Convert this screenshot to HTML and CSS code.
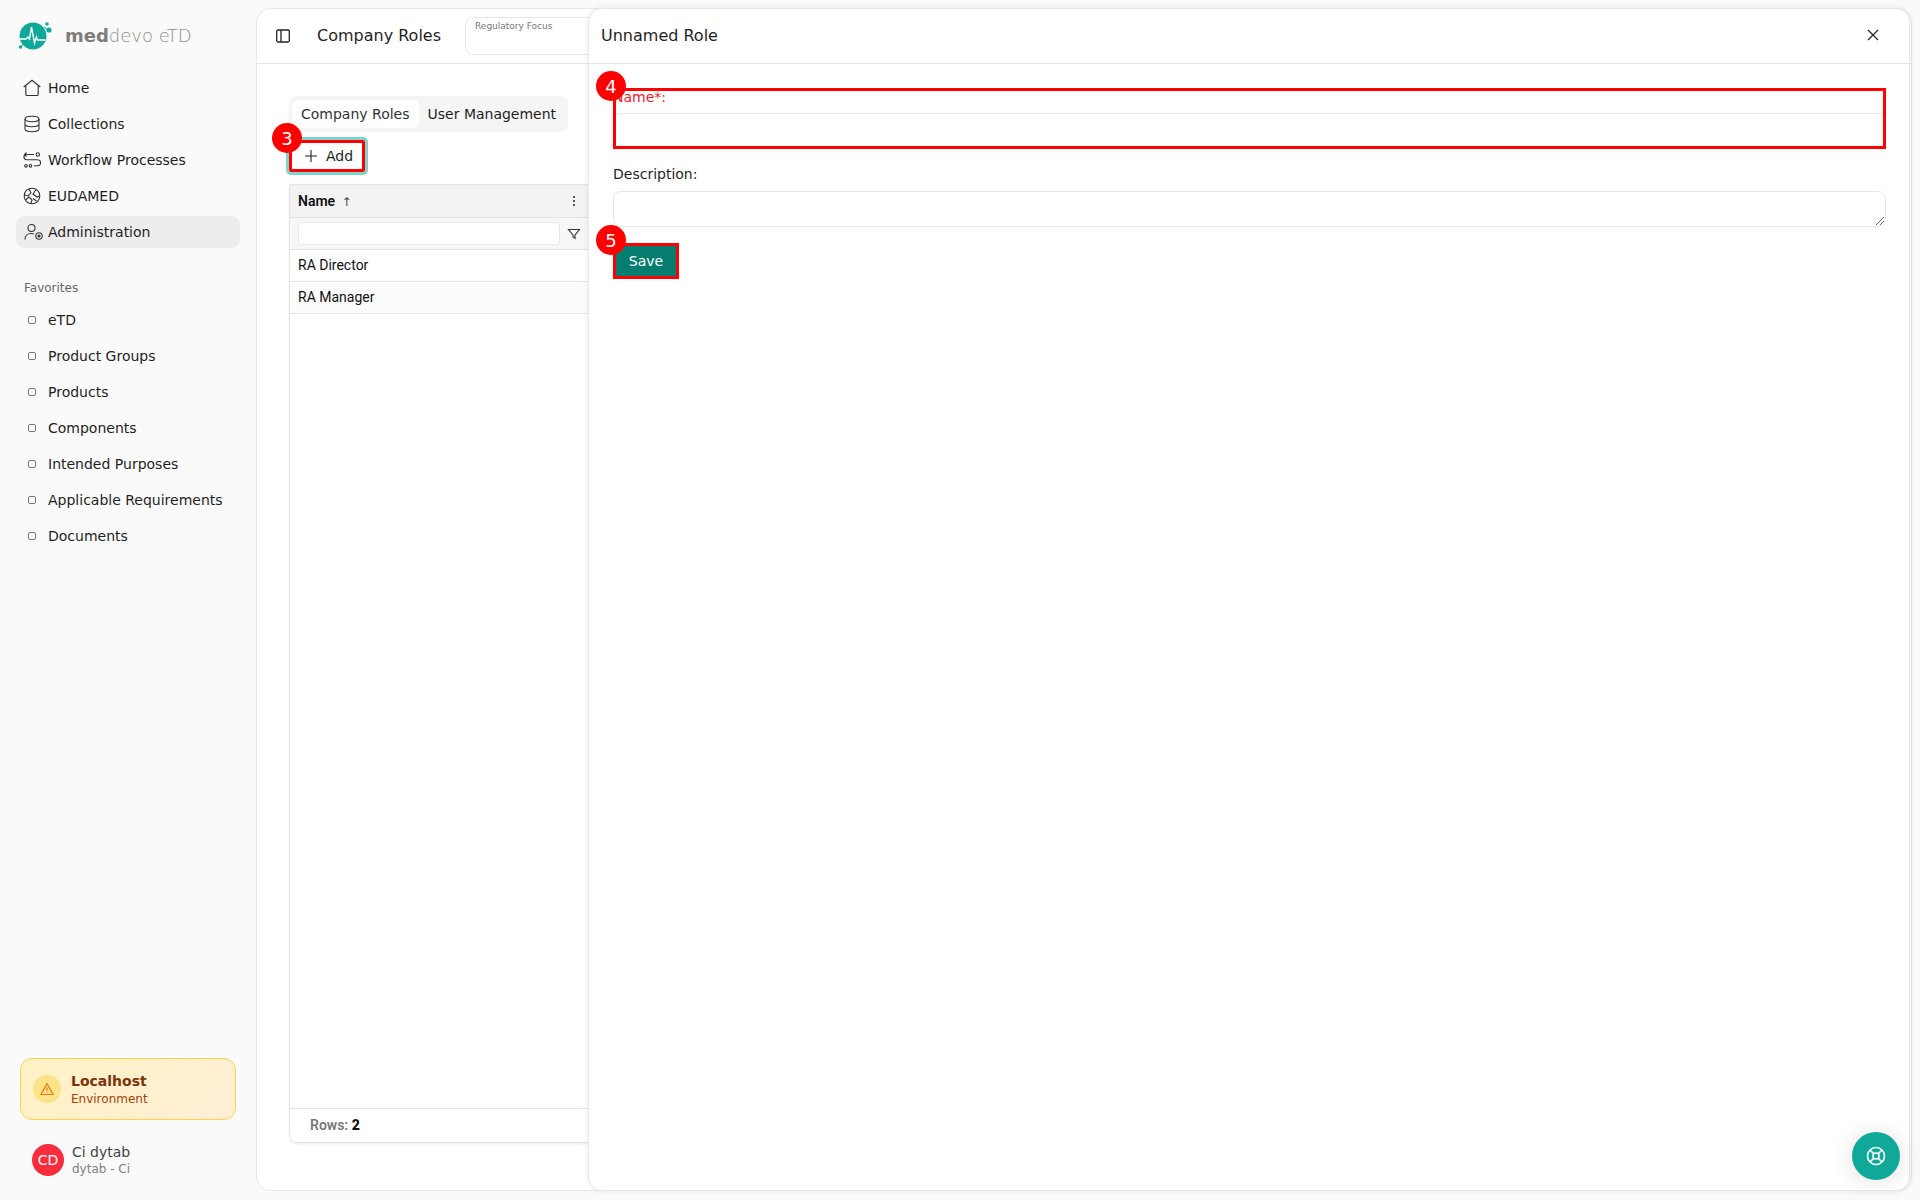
FILE: index.html
```html
<!DOCTYPE html>
<html lang="en">
<head>
    <meta charset="UTF-8">
    <title>Company Roles</title>
    <link rel="stylesheet" href="styles.css">
</head>
<body>
    <aside class="sidebar">
        <div class="logo">
            <svg class="logo-mark" width="36" height="32" viewBox="0 0 36 32">
                <circle cx="15" cy="17" r="13.500" fill="#10a899"/>
                <circle cx="29" cy="5" r="1.800" fill="#10a899"/>
                <circle cx="31" cy="11" r="2.600" fill="#10a899"/>
                <circle cx="2.500" cy="28" r="1.800" fill="#10a899"/>
                <path d="M26 8l4 3M2.500 28l3-3" stroke="#10a899" stroke-width="1"/>
                <path d="M1 20h7l2-2 1.500 2L13.500 8l3 16 2-6 1 3h8" fill="none" stroke="#fff" stroke-width="1.400"/>
            </svg>
            <span class="logo-text"><b>med</b>devo eTD</span>
        </div>
        <nav class="nav">
            <a class="nav-item">
                <svg class="nav-icon" viewBox="0 0 18 18"><path d="M.7 8 9 1.300 17.300 8M2.800 6.500v9a1 1 0 0 0 1 1h10.400a1 1 0 0 0 1-1v-9"/></svg>
                Home
            </a>
            <a class="nav-item">
                <svg class="nav-icon" viewBox="0 0 18 18"><ellipse cx="9" cy="4" rx="7" ry="2.700"/><path d="M2 4v10c0 1.500 3.100 2.700 7 2.700s7-1.200 7-2.700V4M2 9c0 1.500 3.100 2.700 7 2.700s7-1.200 7-2.700"/></svg>
                Collections
            </a>
            <a class="nav-item">
                <svg class="nav-icon" viewBox="0 0 18 18"><circle cx="14.800" cy="3.500" r="1.700"/><circle cx="3" cy="14.800" r="1.300"/><circle cx="7.500" cy="14.800" r="1.300"/><path d="M11 3.500H3.500a2.500 2.500 0 0 0 0 5.200h11a2.900 2.900 0 0 1 0 6.100H11M3.500 1.500 1.500 3.500l2 2"/></svg>
                Workflow Processes
            </a>
            <a class="nav-item">
                <svg class="nav-icon" viewBox="0 0 18 18"><circle cx="9" cy="9" r="7.800"/><path d="M6 2 8 6 5 9 1.500 8M13 2.500 10 7l4 3 2.500-1M2.500 13 6 10l3 3-1 3.500M10 11.500l3.500 2.500"/></svg>
                EUDAMED
            </a>
            <a class="nav-item active">
                <svg class="nav-icon wide" viewBox="0 0 20 18"><circle cx="7.500" cy="5" r="3.500"/><path d="M1 16.500c0-3.500 2.500-6 6-6 1 0 2 .2 2.800.6"/><circle cx="15" cy="13" r="3.200"/><circle cx="15" cy="13" r="1" fill="#333"/></svg>
                Administration
            </a>
        </nav>
        <div class="nav-label">Favorites</div>
        <nav class="nav">
            <a class="nav-item"><span class="fav-dot"></span>eTD</a>
            <a class="nav-item"><span class="fav-dot"></span>Product Groups</a>
            <a class="nav-item"><span class="fav-dot"></span>Products</a>
            <a class="nav-item"><span class="fav-dot"></span>Components</a>
            <a class="nav-item"><span class="fav-dot"></span>Intended Purposes</a>
            <a class="nav-item"><span class="fav-dot"></span>Applicable Requirements</a>
            <a class="nav-item"><span class="fav-dot"></span>Documents</a>
        </nav>
        <div class="env-card">
            <div class="env-icon">
                <svg width="14" height="14" viewBox="0 0 14 14" fill="none" stroke="#e8791a" stroke-width="1.200"><path d="M7 1.500 13 12.500H1zM7 5.500v3.500M7 10.300v.8"/></svg>
            </div>
            <div>
                <div class="env-name">Localhost</div>
                <div class="env-sub">Environment</div>
            </div>
        </div>
        <div class="user">
            <div class="avatar">CD</div>
            <div>
                <div class="user-name">Ci dytab</div>
                <div class="user-sub">dytab - Ci</div>
            </div>
        </div>
    </aside>

    <main class="panel">
        <header class="topbar">
            <svg class="toggle" width="16" height="16" viewBox="0 0 16 16" fill="none" stroke="#222" stroke-width="1.300"><rect x="1.700" y="2" width="12.600" height="12" rx="1.500"/><path d="M6 2v12"/></svg>
            <div class="page-title">Company Roles</div>
            <div class="focus-box">Regulatory Focus</div>
        </header>
        <div class="content">
            <div class="tabs">
                <div class="tab active">Company Roles</div>
                <div class="tab">User Management</div>
            </div>
            <div class="toolbar">
                <button class="add-button marked">
                    <span class="badge">3</span>
                    <svg width="14" height="14" viewBox="0 0 14 14" stroke="#222" stroke-width="1.100"><path d="M7 1v12M1 7h12"/></svg>
                    Add
                </button>
            </div>
            <section class="grid">
                <div class="grid-head">
                    <span class="grid-head-name">Name <span class="sort">↑</span></span>
                    <svg class="grid-menu" width="4" height="12" viewBox="0 0 4 12" fill="#333"><circle cx="2" cy="2" r="1.100"/><circle cx="2" cy="6" r="1.100"/><circle cx="2" cy="10" r="1.100"/></svg>
                </div>
                <div class="grid-filter">
                    <div class="filter-input"></div>
                    <svg class="filter-icon" width="14" height="14" viewBox="0 0 14 14" fill="none" stroke="#333" stroke-width="1.100"><path d="M1.500 2.500h11L8 8v3.500L6 10V8z"/></svg>
                </div>
                <div class="grid-row">RA Director</div>
                <div class="grid-row alt">RA Manager</div>
                <div class="grid-space"></div>
                <div class="grid-foot"><span>Rows:</span> <b>2</b></div>
            </section>
        </div>
    </main>

    <section class="drawer">
        <header class="drawer-head">
            <div class="drawer-title">Unnamed Role</div>
            <svg class="close" width="12" height="12" viewBox="0 0 12 12" stroke="#222" stroke-width="1.200"><path d="M1 1l10 10M11 1 1 11"/></svg>
        </header>
        <form class="drawer-form">
            <div class="name-field marked">
                <span class="badge">4</span>
                <label class="field-label required">Name*:</label>
                <div class="name-input"></div>
            </div>
            <label class="field-label desc-label">Description:</label>
            <div class="desc-input">
                <svg class="resize" width="8" height="8" viewBox="0 0 8 8" stroke="#666" stroke-width="1"><path d="M0 8l8-8M4 8l4-4"/></svg>
            </div>
            <button type="button" class="save-button marked">
                <span class="badge">5</span>
                Save
            </button>
        </form>
    </section>

    <button class="help">
        <svg width="20" height="20" viewBox="0 0 20 20" fill="none" stroke="#fff" stroke-width="1.600"><circle cx="10" cy="10" r="8.500"/><circle cx="10" cy="10" r="3"/><path d="M4 4l3.900 3.900M16 4l-3.900 3.900M4 16l3.900-3.900M16 16l-3.900-3.900"/></svg>
    </button>
</body>
</html>
```

FILE: styles.css
```css
* {
    box-sizing: border-box;
}

html, body {
    height: 100%;
}

body {
    margin: 0;
    height: 1200px;
    overflow: hidden;
    display: flex;
    position: relative;
    background: #fafafa;
    font-family: "DejaVu Sans", sans-serif;
    font-size: 14px;
    color: #1f1f1f;
}

/* Sidebar */
.sidebar {
    width: 256px;
    flex-shrink: 0;
    display: flex;
    flex-direction: column;
    padding: 0 16px;
}

.logo {
    height: 70px;
    display: flex;
    align-items: center;
    gap: 11px;
    padding-left: 2px;
}

.logo-text {
    font-size: 18px;
    font-weight: 200;
    color: #8f8f8f;
}

.logo-text b {
    font-weight: bold;
    color: #7d7d7d;
}

.nav {
    display: flex;
    flex-direction: column;
}

.nav-item {
    height: 36px;
    display: flex;
    align-items: center;
    padding-left: 32px;
    position: relative;
    border-radius: 8px;
    font-size: 14px;
}

.nav-item.active {
    height: 32px;
    margin: 2px 0;
    background: #ededed;
}

.nav-icon {
    position: absolute;
    left: 7px;
    top: 50%;
    margin-top: -9px;
    width: 18px;
    height: 18px;
    fill: none;
    stroke: #333;
    stroke-width: 1.100;
}

.nav-icon.wide {
    width: 20px;
    left: 8px;
}

.fav-dot {
    position: absolute;
    left: 12px;
    top: 50%;
    margin-top: -4px;
    width: 8px;
    height: 8px;
    border: 1.500px solid #777;
    border-radius: 2px;
}

.nav-label {
    margin: 30px 0 6px 8px;
    height: 16px;
    font-size: 12px;
    line-height: 16px;
    color: #666;
}

.env-card {
    margin: auto 4px 0;
    height: 62px;
    display: flex;
    align-items: center;
    gap: 10px;
    padding-left: 12px;
    background: linear-gradient(135deg, #fff2c4, #ffeed6);
    border: 1px solid #fcd34d;
    border-radius: 12px;
}

.env-icon {
    width: 28px;
    height: 28px;
    display: flex;
    align-items: center;
    justify-content: center;
    background: #fde388;
    border-radius: 50%;
}

.env-name {
    font-size: 14px;
    font-weight: bold;
    color: #78350f;
    line-height: 18px;
}

.env-sub {
    margin-top: 1px;
    font-size: 12px;
    color: #a1420a;
    line-height: 16px;
}

.user {
    height: 80px;
    display: flex;
    align-items: center;
    gap: 8px;
    padding: 0 0 0 16px;
}

.avatar {
    width: 32px;
    height: 32px;
    display: flex;
    align-items: center;
    justify-content: center;
    background: #fb2c3e;
    border-radius: 50%;
    color: #fff;
    font-size: 14px;
}

.user-name {
    font-size: 14px;
    color: #444;
    line-height: 18px;
}

.user-sub {
    font-size: 12px;
    color: #808080;
    line-height: 16px;
}

/* Main panel */
.panel {
    flex: 1;
    margin: 8px 8px 9px 0;
    background: #fff;
    border: 1px solid #e8e8e8;
    border-radius: 14px;
    display: flex;
    flex-direction: column;
    overflow: hidden;
}

.topbar {
    height: 55px;
    flex-shrink: 0;
    display: flex;
    align-items: center;
    padding: 0 0 1px 18px;
    border-bottom: 1px solid #e6e6e6;
}

.toggle {
    margin-right: 26px;
}

.page-title {
    font-size: 16px;
    width: 148px;
}

.focus-box {
    width: 400px;
    height: 38px;
    padding: 3px 9px;
    border: 1px solid #e6e6e6;
    border-radius: 8px;
    font-size: 9px;
    color: #777;
}

.content {
    flex: 1;
    display: flex;
    flex-direction: column;
    padding: 32px 32px 47px;
}

.tabs {
    align-self: flex-start;
    display: flex;
    gap: 0;
    height: 36px;
    padding: 4px 3px;
    background: #f5f5f5;
    border-radius: 8px;
}

.tab {
    padding: 0 9px;
    line-height: 29px;
    font-size: 14px;
    border-radius: 6px;
}

.tab.active {
    background: #fff;
    color: #333;
}

.toolbar {
    display: flex;
    margin-top: 8px;
}

.marked {
    position: relative;
    outline: 3px solid #ff0000;
    outline-offset: -3px;
}

.badge {
    position: absolute;
    width: 30px;
    height: 30px;
    display: flex;
    align-items: center;
    justify-content: center;
    background: #ff0000;
    border-radius: 50%;
    color: #fff;
    font-family: "DejaVu Sans", sans-serif;
    font-size: 18px;
    z-index: 2;
}

.add-button {
    width: 76px;
    height: 32px;
    display: flex;
    align-items: center;
    gap: 8px;
    padding: 0 0 0 15px;
    background: #fff;
    border: none;
    border-radius: 2px;
    box-shadow: 0 0 0 3px #7dd4cb;
    font-family: "DejaVu Sans", sans-serif;
    font-size: 14px;
    color: #1f1f1f;
}

.add-button .badge {
    left: -17px;
    top: -17px;
}

.grid {
    flex: 1;
    margin-top: 12px;
    width: 1590px;
    display: flex;
    flex-direction: column;
    border: 1px solid #e6e6e6;
    border-radius: 0 0 8px 8px;
    box-shadow: 0 1px 3px rgba(0, 0, 0, 0.08);
    font-family: Roboto, sans-serif;
    font-size: 14px;
    color: #111;
}

.grid-head {
    height: 33px;
    display: flex;
    align-items: center;
    justify-content: space-between;
    padding: 0 1302px 0 8px;
    background: #f3f3f3;
    border-bottom: 1px solid #e3e3e3;
    font-weight: 600;
}

.sort {
    margin-left: 3px;
    font-family: "DejaVu Sans", sans-serif;
    font-size: 12px;
    font-weight: normal;
    color: #444;
}

.grid-menu {
    flex-shrink: 0;
}

.grid-filter {
    height: 32px;
    display: flex;
    align-items: center;
    gap: 7px;
    padding: 0 8px;
    background: #f7f7f7;
    border-bottom: 1px solid #e3e3e3;
}

.filter-input {
    width: 262px;
    height: 23px;
    background: #fff;
    border: 1px solid #e8e8e8;
    border-radius: 4px;
}

.grid-row {
    height: 32px;
    padding-left: 8px;
    line-height: 31px;
    border-bottom: 1px solid #e6e6e6;
}

.grid-row.alt {
    background: #fcfcfc;
}

.grid-space {
    flex: 1;
}

.grid-foot {
    height: 34px;
    padding-left: 20px;
    line-height: 32px;
    border-top: 1px solid #e6e6e6;
    font-weight: 600;
}

.grid-foot span {
    color: #777;
}

/* Drawer over the main panel */
.drawer {
    position: absolute;
    left: 588px;
    top: 8px;
    width: 1322px;
    height: 1183px;
    background: #fff;
    border: 1px solid #e8e8e8;
    border-radius: 14px;
    box-shadow: 0 0 6px rgba(0, 0, 0, 0.08);
    display: flex;
    flex-direction: column;
}

.drawer-head {
    height: 55px;
    flex-shrink: 0;
    display: flex;
    align-items: center;
    justify-content: space-between;
    padding: 0 30px 2px 12px;
    border-bottom: 1px solid #e6e6e6;
}

.drawer-title {
    font-size: 16px;
}

.drawer-form {
    display: flex;
    flex-direction: column;
    padding: 24px 23px 0 24px;
}

.field-label {
    display: block;
    font-size: 14px;
    line-height: 17px;
}

.name-field {
    height: 61px;
    padding-top: 0;
}

.name-field .badge {
    left: -17px;
    top: -17px;
}

.required {
    color: #e7212f;
    padding-top: 1px;
}

.name-input {
    margin-top: 7px;
    height: 36px;
    border: 1px solid #e6e6e6;
    border-radius: 8px;
}

.desc-label {
    margin-top: 17px;
}

.desc-input {
    position: relative;
    margin-top: 8px;
    height: 36px;
    border: 1px solid #e6e6e6;
    border-radius: 8px;
}

.resize {
    position: absolute;
    right: 1px;
    bottom: 1px;
}

.save-button {
    align-self: flex-start;
    margin-top: 16px;
    width: 66px;
    height: 36px;
    background: #047d6f;
    border: none;
    color: #fff;
    font-family: "DejaVu Sans", sans-serif;
    font-size: 14px;
}

.save-button .badge {
    left: -17px;
    top: -18px;
}

.help {
    position: absolute;
    left: 1852px;
    top: 1132px;
    width: 48px;
    height: 48px;
    display: flex;
    align-items: center;
    justify-content: center;
    padding: 0;
    background: #10a899;
    border: none;
    border-radius: 50%;
    box-shadow: 0 2px 24px rgba(0, 0, 0, 0.12);
}
```
